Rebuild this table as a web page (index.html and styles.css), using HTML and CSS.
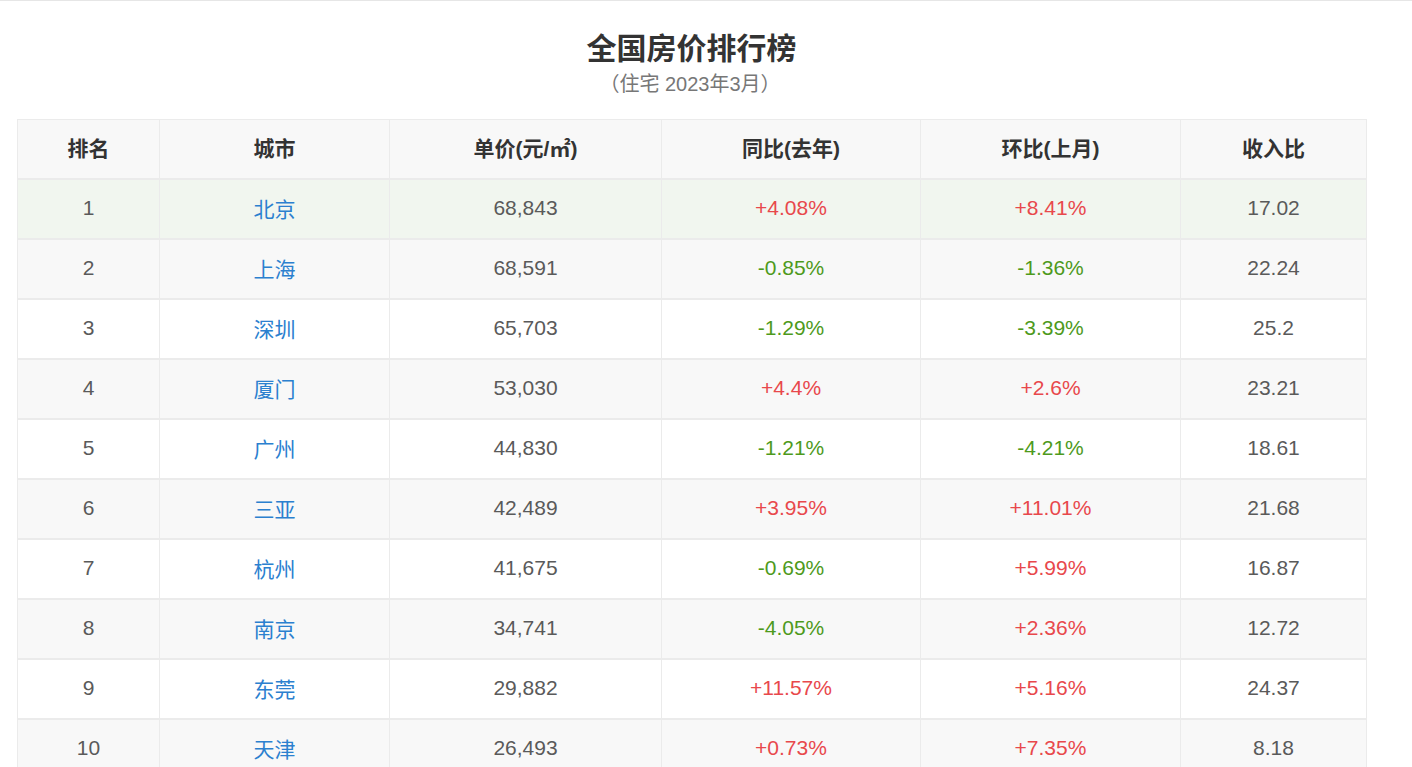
FILE: index.html
```html
<!DOCTYPE html>
<html lang="zh">
<head>
<meta charset="utf-8">
<title>全国房价排行榜</title>
<link rel="stylesheet" href="styles.css">
</head>
<body>
<div class="page">
  <div class="wrap">
    <header class="head">
      <h1 class="title">全国房价排行榜</h1>
      <div class="sub">（住宅 2023年3月）</div>
    </header>
    <table class="rank">
      <colgroup>
        <col class="c1"><col class="c2"><col class="c3"><col class="c4"><col class="c5"><col class="c6">
      </colgroup>
      <thead>
        <tr><th>排名</th><th>城市</th><th>单价(元/㎡)</th><th>同比(去年)</th><th>环比(上月)</th><th>收入比</th></tr>
      </thead>
      <tbody>
        <tr class="hl"><td>1</td><td class="city">北京</td><td>68,843</td><td class="up">+4.08%</td><td class="up">+8.41%</td><td>17.02</td></tr>
        <tr><td>2</td><td class="city">上海</td><td>68,591</td><td class="down">-0.85%</td><td class="down">-1.36%</td><td>22.24</td></tr>
        <tr><td>3</td><td class="city">深圳</td><td>65,703</td><td class="down">-1.29%</td><td class="down">-3.39%</td><td>25.2</td></tr>
        <tr><td>4</td><td class="city">厦门</td><td>53,030</td><td class="up">+4.4%</td><td class="up">+2.6%</td><td>23.21</td></tr>
        <tr><td>5</td><td class="city">广州</td><td>44,830</td><td class="down">-1.21%</td><td class="down">-4.21%</td><td>18.61</td></tr>
        <tr><td>6</td><td class="city">三亚</td><td>42,489</td><td class="up">+3.95%</td><td class="up">+11.01%</td><td>21.68</td></tr>
        <tr><td>7</td><td class="city">杭州</td><td>41,675</td><td class="down">-0.69%</td><td class="up">+5.99%</td><td>16.87</td></tr>
        <tr><td>8</td><td class="city">南京</td><td>34,741</td><td class="down">-4.05%</td><td class="up">+2.36%</td><td>12.72</td></tr>
        <tr><td>9</td><td class="city">东莞</td><td>29,882</td><td class="up">+11.57%</td><td class="up">+5.16%</td><td>24.37</td></tr>
        <tr><td>10</td><td class="city">天津</td><td>26,493</td><td class="up">+0.73%</td><td class="up">+7.35%</td><td>8.18</td></tr>
      </tbody>
    </table>
  </div>
</div>
</body>
</html>
```
FILE: styles.css
```css
html, body {
  margin: 0;
  padding: 0;
  background: #fff;
}
body {
  font-family: "Liberation Sans", "Noto Sans CJK SC", sans-serif;
  color: #5a5a5a;
}
.page {
  border-top: 1px solid #e6e6e6;
}
.wrap {
  width: 1349px;
  margin-left: 17px;
}
.head {
  text-align: center;
  padding-top: 27px;
  height: 118px;
  box-sizing: border-box;
}
.title {
  margin: 0;
  font-family: "Noto Sans CJK SC", sans-serif;
  font-size: 30px;
  font-weight: 700;
  line-height: 36px;
  color: #333;
}
.sub {
  font-size: 20px;
  line-height: 24px;
  color: #777;
  margin-top: 8px;
  margin-left: -3px;
}
.rank {
  width: 100%;
  border-collapse: collapse;
  table-layout: fixed;
  font-size: 21px;
}
.c1 { width: 142px; }
.c2 { width: 230px; }
.c3 { width: 272px; }
.c4 { width: 259px; }
.c5 { width: 260px; }
.c6 { width: 186px; }
.rank th, .rank td {
  border: 1px solid #ebebeb;
  border-top-width: 2px;
  height: 56px;
  padding: 0 0 2px;
  text-align: center;
  vertical-align: middle;
}
.rank th {
  font-family: "Liberation Sans", "Noto Sans CJK SC", sans-serif;
  font-weight: 700;
  color: #333;
  background: #f8f8f8;
}
.rank thead tr th {
  border-top-width: 1px;
  height: 54px;
  padding-bottom: 4px;
}
.rank tbody tr:nth-child(even) td {
  background: #f8f8f8;
}
.rank tbody tr:nth-child(odd) td {
  background: #fff;
}
.rank tbody tr.hl td {
  background: #f1f6ef;
}
.city {
  color: #2b80cf;
}
.up {
  color: #e8484c;
}
.down {
  color: #4e9a1c;
}
```
